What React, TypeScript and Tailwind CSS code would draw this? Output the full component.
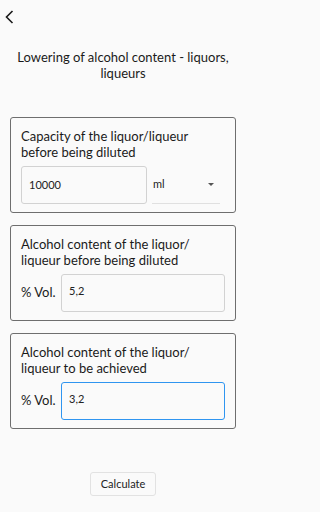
import React from 'react'

const font = { fontFamily: 'Lato, "Noto Sans", sans-serif' }

function Card({ title, children }: { title: React.ReactNode; children: React.ReactNode }) {
  return (
    <div className="h-[96px] rounded-[3px] border border-[#6e6e6e] px-[10px] pt-[10px]">
      <p className="text-[13px] leading-[16px] text-[#1a1a1a]">{title}</p>
      <div className="mt-[6px] flex items-center">{children}</div>
    </div>
  )
}

export default function App() {
  return (
    <div className="min-h-screen w-full bg-[#fafafa]" style={font}>
      <div className="h-[512px] w-[246px] overflow-hidden">
        <div className="flex h-[34px] items-start pl-[5px] pt-[10px]">
          <svg width="9" height="14" viewBox="0 0 9 14" fill="none">
            <path d="M7.5 1 L1.5 7 L7.5 13" stroke="#1a1a1a" strokeWidth="1.6" />
          </svg>
        </div>

        <h1 className="mt-[15px] px-[12px] text-center text-[13px] leading-[16px] text-[#1a1a1a]">
          Lowering of alcohol content - liquors, liqueurs
        </h1>

        <div className="mt-[36px] flex flex-col gap-[12px] px-[10px]">
          <Card title={<>Capacity of the liquor/liqueur<br />before being diluted</>}>
            <div className="flex h-[38px] w-[126px] items-center rounded-[3px] border border-[#d2d2d2] px-[7px] text-[11px] text-[#222]">
              10000
            </div>
            <div className="ml-[5px] flex h-[38px] w-[68px] items-center justify-between border-b border-[#e0e0e0] pl-[1px] pr-[6px] text-[11px] text-[#222]">
              <span>ml</span>
              <svg width="6" height="3" viewBox="0 0 6 3">
                <path d="M0 0 L6 0 L3 3 Z" fill="#555" />
              </svg>
            </div>
          </Card>

          <Card title={<>Alcohol content of the liquor/<br />liqueur before being diluted</>}>
            <span className="w-[40px] text-[13px] text-[#1a1a1a]">% Vol.</span>
            <div className="flex h-[38px] flex-1 items-center rounded-[3px] border border-[#d2d2d2] px-[7px] pb-[3px] text-[11px] text-[#222]">
              5,2
            </div>
          </Card>

          <Card title={<>Alcohol content of the liquor/<br />liqueur to be achieved</>}>
            <span className="w-[40px] text-[13px] text-[#1a1a1a]">% Vol.</span>
            <div className="flex h-[38px] flex-1 items-center rounded-[3px] border-[1.5px] border-[#2f95f0] px-[7px] pb-[3px] text-[11px] text-[#222]">
              3,2
            </div>
          </Card>
        </div>

        <div className="mt-[43px] flex justify-center">
          <button className="h-[24px] w-[66px] rounded-[3px] border border-[#e2e2e2] bg-[#fafafa] text-[11px] text-[#222]">
            Calculate
          </button>
        </div>
      </div>
    </div>
  )
}
